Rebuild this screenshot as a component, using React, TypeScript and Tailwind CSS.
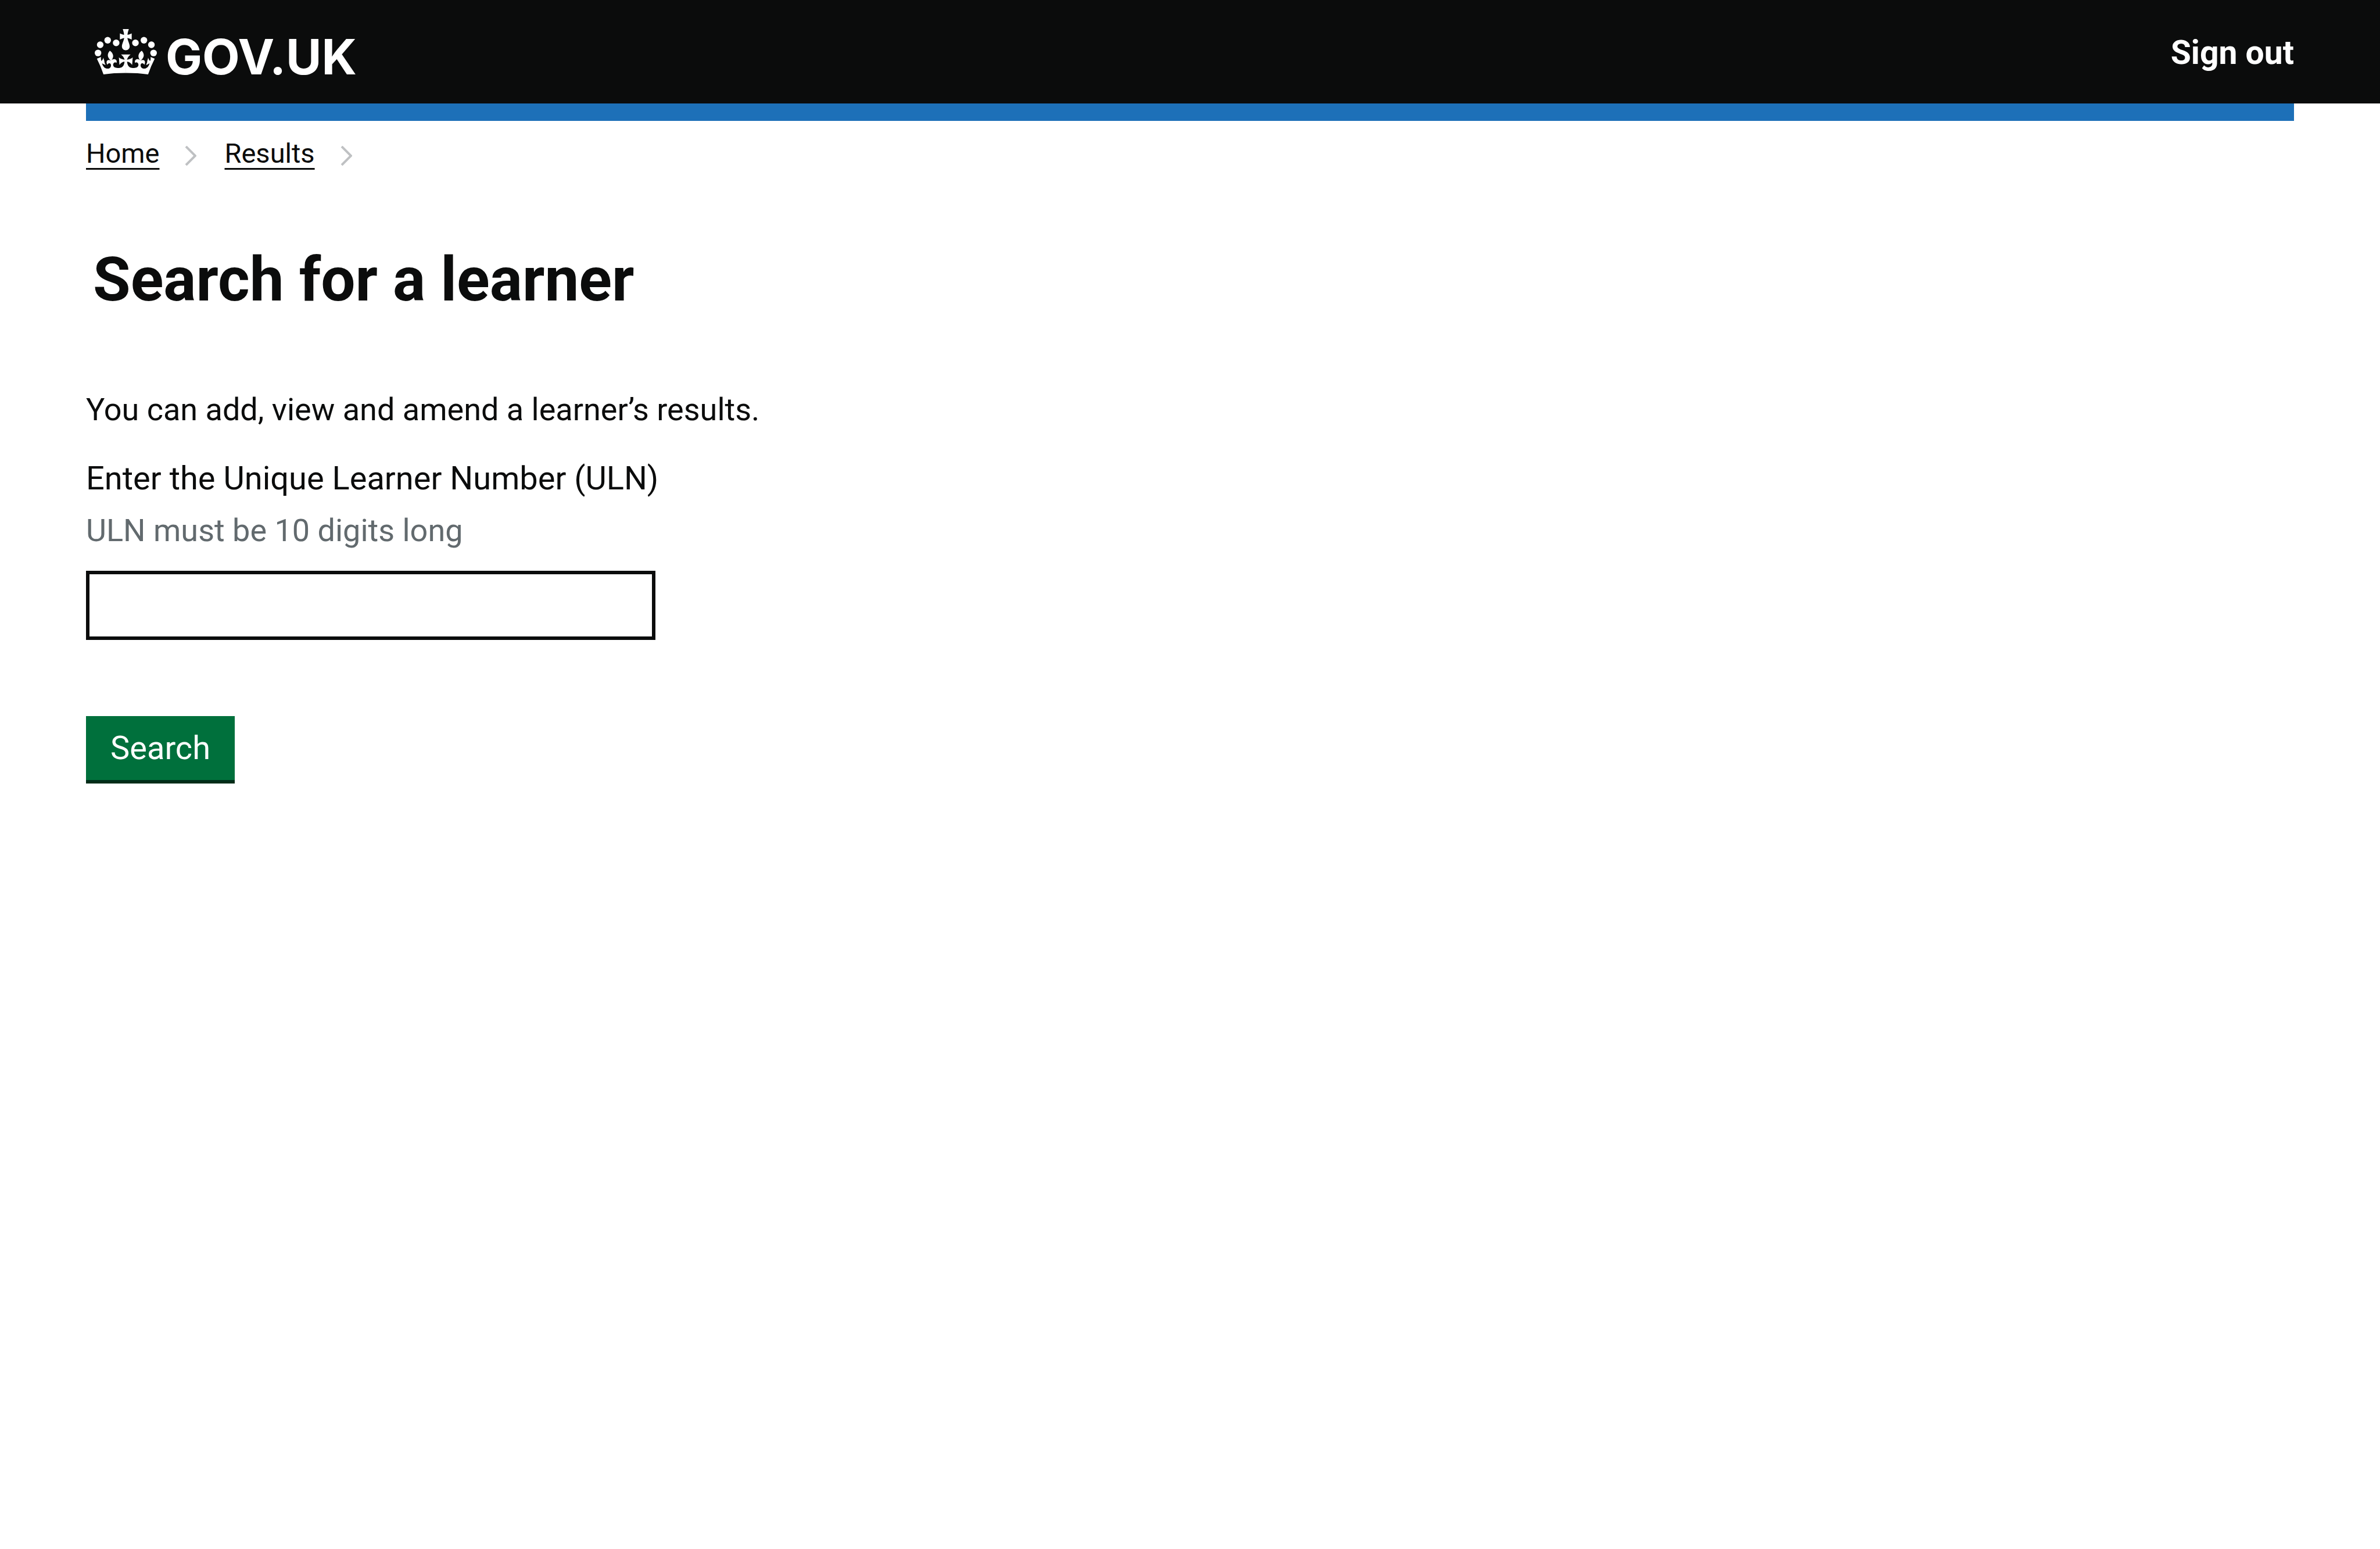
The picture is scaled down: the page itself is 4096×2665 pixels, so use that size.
const beads: [number, number][] = [
  [98, 190],
  [150, 159],
  [209, 177],
  [83, 247],
];

function CrownHalf() {
  return (
    <>
      {beads.map(([cx, cy]) => (
        <circle key={cx} cx={cx} cy={cy} r="23" />
      ))}
      <path d="M277 81H255C259 94 264 108 264 121C254 119 244 115 235 111V154C244 150 254 146 265 143C262 164 249 184 249 202C249 217 261 228 277 228Z" />
      <path d="M165 231C156 241 151 252 151 263C151 276 160 290 171 299H175C183 290 189 279 188 266C187 252 178 240 165 231Z" />
      <path d="M277 386Q190 386 121 396Q101 337 75 287L104 275C102 284 103 295 107 303C113 297 118 289 121 280C122 289 124 296 127 301C126 308 129 319 136 330C127 328 119 323 111 319C117 344 133 356 150 356C166 356 175 343 173 330C171 320 165 317 158 319C152 321 149 325 147 329C140 315 141 300 152 297C160 295 166 298 173 300C180 290 198 285 208 295C214 301 214 310 211 316C206 311 198 312 193 316C184 326 187 343 203 349C214 353 234 353 243 349C258 343 266 327 267 307C254 308 240 318 232 330L228 278C240 288 255 293 268 294C264 280 255 268 243 258H277Z" />
    </>
  );
}

function Crown() {
  return (
    <svg viewBox="60 81 432 315" className="h-[78px] w-[107px] shrink-0" fill="currentColor" aria-hidden="true">
      <CrownHalf />
      <g transform="translate(552 0) scale(-1 1)">
        <CrownHalf />
      </g>
    </svg>
  );
}

function Chevron() {
  return (
    <svg viewBox="0 0 20 34" className="mt-2 h-[34px] w-5 shrink-0" fill="none" stroke="#bfc1c3" strokeWidth="4" aria-hidden="true">
      <path d="M2 1L18 17L2 33" />
    </svg>
  );
}

function Crumb({ label }: { label: string }) {
  return (
    <li className="flex items-center gap-11">
      <a
        href="#"
        className="underline decoration-[3px] underline-offset-[9px] [text-decoration-skip-ink:none]"
      >
        {label}
      </a>
      <Chevron />
    </li>
  );
}

export default function App() {
  return (
    <div className="min-h-screen bg-white font-[Roboto,sans-serif] text-[#0b0c0c]">
      <header className="bg-[#0b0c0c] text-white">
        <div className="flex items-start justify-between px-[148px] pt-[50px] pb-10">
          <a href="#" className="ml-[15px] flex items-baseline gap-[15px]">
            <Crown />
            <span className="font-[Inter,sans-serif] text-[84px] leading-[80px] font-bold">GOV.UK</span>
          </a>
          <a href="#" className="text-[57px] leading-[82px] font-bold">
            Sign out
          </a>
        </div>
      </header>

      <div className="px-[148px]">
        <div className="h-[30px] bg-[#1d70b8]" />

        <nav aria-label="Breadcrumb" className="mt-[26px]">
          <ol className="flex gap-12 text-[47px] leading-[60px]">
            <Crumb label="Home" />
            <Crumb label="Results" />
          </ol>
        </nav>

        <main>
          <h1 className="mt-32 pl-3 text-[105px] leading-[120px] font-bold">Search for a learner</h1>
          <p className="mt-32 text-[54px] leading-[70px]">
            You can add, view and amend a learner’s results.
          </p>

          <form className="mt-12 flex flex-col items-start" onSubmit={(e) => e.preventDefault()}>
            <label htmlFor="uln" className="text-[56px] leading-[70px]">
              Enter the Unique Learner Number (ULN)
            </label>
            <p id="uln-hint" className="mt-5 text-[54px] leading-[70px] text-[#626a6e]">
              ULN must be 10 digits long
            </p>
            <input
              id="uln"
              type="text"
              inputMode="numeric"
              aria-describedby="uln-hint"
              className="mt-[34px] h-[119px] w-[980px] max-w-full border-[6px] border-[#0b0c0c] bg-white px-6 text-[54px]"
            />
            <button
              type="submit"
              className="mt-[131px] border-b-[6px] border-[#002d18] bg-[#00703c] px-[42px] py-5 text-[56px] leading-[70px] text-white"
            >
              Search
            </button>
          </form>
        </main>
      </div>
    </div>
  );
}
